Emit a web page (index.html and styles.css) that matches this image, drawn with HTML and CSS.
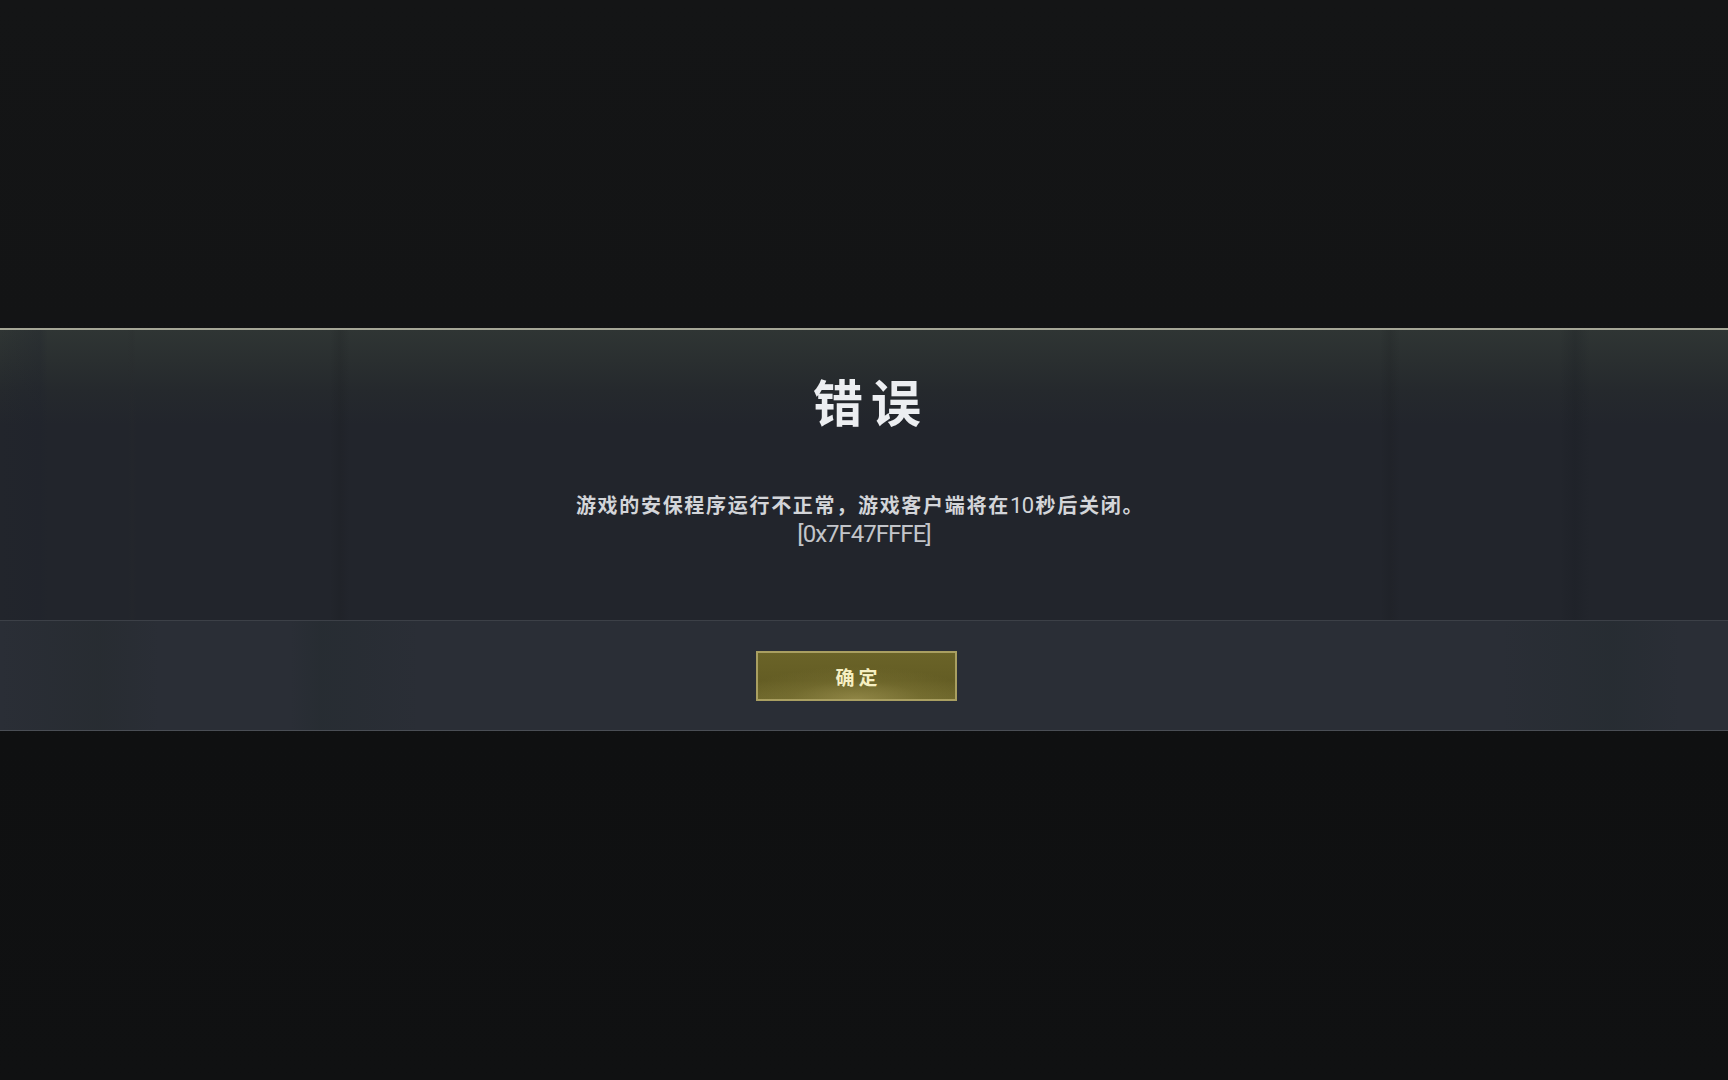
FILE: index.html
```html
<!DOCTYPE html>
<html lang="zh-CN">
<head>
<meta charset="utf-8">
<title>错误</title>
<link rel="stylesheet" href="styles.css">
</head>
<body>
  <div class="screen">
    <section class="dialog">
      <div class="dialog-body">
        <h1 class="dialog-title">错误</h1>
        <p class="dialog-message">游戏的安保程序运行不正常，游戏客户端将在<span class="num">10</span>秒后关闭。</p>
        <p class="dialog-code">[0x7F47FFFE]</p>
      </div>
      <div class="dialog-foot">
        <button class="btn-confirm" type="button">确定</button>
      </div>
    </section>
  </div>
</body>
</html>
```

FILE: styles.css
```css
html, body {
  margin: 0;
  padding: 0;
  height: 100%;
  background: #121314;
}

.screen {
  height: 1080px;
  overflow: hidden;
  background: linear-gradient(180deg, #141516 0, #131415 320px, #0f1011 740px, #101112 100%);
  font-family: "Noto Sans CJK SC", "Noto Sans", sans-serif;
  display: flex;
  flex-direction: column;
}

.dialog {
  margin-top: 328px;
  border-top: 2px solid #a5a696;
  display: flex;
  flex-direction: column;
}

/* main message area with a slight greenish sheen along the top edge */
.dialog-body {
  height: 290px;
  box-sizing: border-box;
  padding-top: 40px;
  text-align: center;
  background:
    linear-gradient(90deg,
      rgba(0,0,0,0) 0, rgba(30,34,44,0.25) 40px, rgba(0,0,0,0) 48px,
      rgba(0,0,0,0) 128px, rgba(40,42,44,0.2) 132px, rgba(0,0,0,0) 136px,
      rgba(0,0,0,0) 330px, rgba(20,22,24,0.15) 340px, rgba(0,0,0,0) 350px,
      rgba(0,0,0,0) 1380px, rgba(20,22,24,0.15) 1390px, rgba(0,0,0,0) 1400px,
      rgba(0,0,0,0) 1560px, rgba(20,24,30,0.2) 1575px, rgba(0,0,0,0) 1590px),
    linear-gradient(180deg, #2f3534 0, #2a2f30 30px, #25292d 60px, #22252c 95px, #22252c 100%);
}

.dialog-title {
  margin: 0;
  font-size: 50px;
  line-height: 60px;
  font-weight: 700;
  letter-spacing: 8px;
  color: #eceef1;
  padding-left: 14px;
}

.dialog-message {
  margin: 61px 0 0;
  font-size: 20px;
  line-height: 28px;
  font-weight: 700;
  letter-spacing: 1.7px;
  color: #d3d5d9;
  padding-right: 8px;
}

.dialog-message .num {
  font-family: Roboto, "Liberation Sans", sans-serif;
  font-weight: 400;
  font-size: 22px;
  letter-spacing: -0.5px;
  margin-right: 2px;
}

.dialog-code {
  margin: 0;
  font-family: Roboto, "Liberation Sans", sans-serif;
  font-size: 24px;
  line-height: 28px;
  letter-spacing: -1px;
  color: #c3c5ca;
}

/* action strip */
.dialog-foot {
  border-top: 1px solid #3c4047;
  border-bottom: 1px solid #4a4e55;
  padding: 30px 0 29px;
  display: flex;
  justify-content: center;
  background:
    linear-gradient(90deg,
      rgba(0,0,0,0) 0, rgba(34,40,40,0.3) 100px, rgba(0,0,0,0) 160px,
      rgba(0,0,0,0) 290px, rgba(30,40,40,0.25) 320px, rgba(0,0,0,0) 420px,
      rgba(0,0,0,0) 1500px, rgba(30,40,40,0.25) 1610px, rgba(0,0,0,0) 1680px),
    #2a2e36;
}

.btn-confirm {
  width: 201px;
  height: 50px;
  margin-right: 15px;
  box-sizing: border-box;
  border: 2px solid #a99f61;
  background:
    radial-gradient(ellipse 60% 70% at 50% 100%, rgba(170,158,90,0.55) 0, rgba(150,140,70,0.2) 55%, rgba(0,0,0,0) 100%),
    linear-gradient(180deg, #6a6328 0, #645d24 60%, #6d662b 100%);
  color: #f6efc3;
  font-family: "Noto Sans CJK SC", sans-serif;
  font-size: 19px;
  font-weight: 700;
  letter-spacing: 4px;
  padding: 0 0 0 4px;
  cursor: pointer;
}
```
